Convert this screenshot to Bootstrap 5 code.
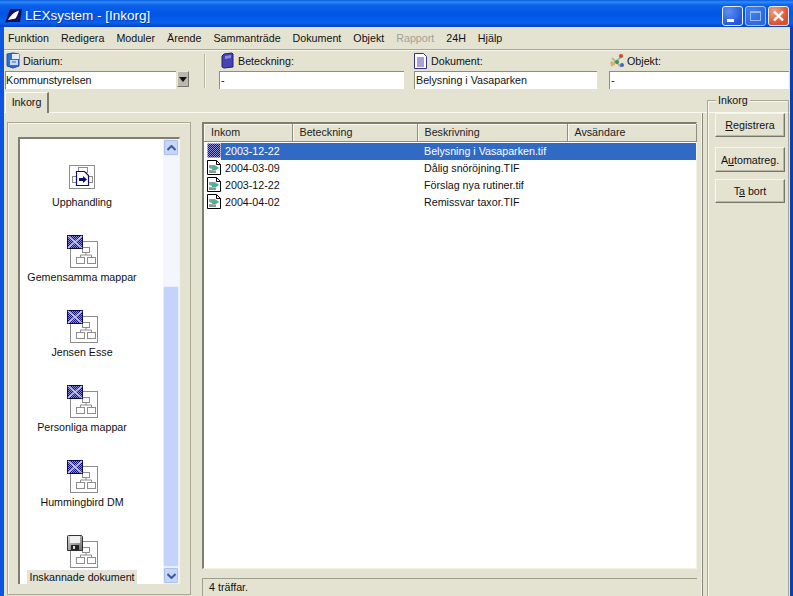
<!DOCTYPE html>
<html lang="sv">

<head>
  <meta charset="UTF-8">
  <title>LEXsystem - [Inkorg]</title>
  <link href="https://cdn.jsdelivr.net/npm/bootstrap@5.3.0/dist/css/bootstrap.min.css" rel="stylesheet">
  <style>
    html, body { height: 596px; overflow: hidden; }
    body { background: #e4e3d2; font: 10.7px/14px "Liberation Sans", Arial, sans-serif; color: #111; }
    .app-window { height: 596px; width: 793px; }
    .title-bar { height: 27px; flex: none; padding: 5px 4px 0 5px; color: #fff; font-size: 13.5px;
      background: linear-gradient(#0a5ae0 0, #2f8bf6 2px, #0b62ea 5px, #0055e5 14px, #0a5fee 23px, #0042bd 27px); }
    .title-text { margin-left: 3px; text-shadow: 1px 1px 0 #0a3a9e; }
    .win-btn { width: 21px; height: 20px; border: 1px solid #e8eefc; border-radius: 3px; padding: 0; display: block; }
    .win-min { background: radial-gradient(circle at 30% 25%, #5a90f6, #2456d8 75%); }
    .win-max { background: radial-gradient(circle at 30% 25%, #5a90f6, #3a6de0 75%); margin-left: 2px; opacity: .72; }
    .win-close { background: radial-gradient(circle at 30% 25%, #f0a08a, #d8502c 70%); margin-left: 2px; }
    .win-frame { border-left: 4px solid #0d55e0; border-right: 3px solid #0c3fae; min-height: 0; }
    .menu-row { height: 23px; flex: none; border-bottom: 1px solid #a8a898; box-shadow: 0 1px 0 #f6f5ea; }
    .menu-row span { margin-right: 12px; }
    .menu-row span:first-child { margin-left: 4px; }
    .menu-off { color: #a3a294; }
    .tool-row { height: 42px; flex: none; }
    .tool-field { flex: none; }
    .tool-label { height: 21px; }
    .tool-label svg { margin-right: 2px; }
    .tool-input { height: 18px; background: #fff; border-top: 1px solid #8e8d7e; border-left: 1px solid #8e8d7e; line-height: 17px; padding-left: 1px; white-space: nowrap; overflow: hidden; }
    .fld-diarium { width: 185px; margin-left: 1px; }
    .fld-diarium .tool-input { width: 171px; padding-left: 0; }
    .fld-bet { width: 185px; margin-left: 27px; }
    .fld-dok { width: 183px; margin-left: 10px; }
    .fld-obj { width: 180px; margin-left: 12px; }
    .lbl-diarium { margin-left: 1px; }
    .lbl-bet { margin-left: 2px; margin-right: 4px !important; }
    .drop-btn { width: 12px; height: 16px; margin-left: 1px; background: #b9b9ae; border: 1px solid #e9e8dc; border-right-color: #77766a; border-bottom-color: #77766a; }
    .tool-sep { width: 2px; height: 34px; background: #b5b4a2; border-right: 1px solid #f5f4ea; margin-left: 14px; margin-right: -14px; margin-top: 4px; }
    .tab-strip { height: 21px; flex: none; border-bottom: 1px solid #fbfaf0; }
    .tab-one { width: 44px; margin-left: 1px; height: 21px; text-align: center; line-height: 19px; border: 1px solid #fbfaf0; border-bottom: 0; border-right: 2px solid #7d7c6e; background: #e4e3d2; }
    .main-row { min-height: 0; }
    .left-pane { width: 184px; margin: 9px 0 1px 3px; border: 1px solid #a9a896; box-shadow: inset 1px 1px 0 #f6f5ea; padding: 14px 10px 10px 10px; flex: none; }
    .tree-box { height: 100%; background: #fff; border-top: 2px solid #7f7e70; border-left: 2px solid #7f7e70; border-right: 1px solid #f4f3e8; }
    .tree-list { width: 124px; flex: none; padding-top: 13px; }
    .tree-item { height: 75px; }
    .tree-icon { height: 40px; padding-top: 8px; }
    .tree-icon.icon-doc { padding-top: 13px; }
    .tree-name { line-height: 14px; padding: 0 2px; margin-top: 3px; white-space: nowrap; }
    .tree-sel { background: #e3e3da; }
    .scroll-col { width: 16px; margin-left: auto; background: #f4f6fd; }
    .scroll-btn { height: 17px; flex: none; background: #c6d6fb; border: 1px solid #eaf0fe; border-radius: 2px; box-shadow: 0 0 0 1px #aebfe8 inset; }
    .scroll-gap { height: 130px; flex: none; }
    .scroll-thumb { background: #c3d3fb; border: 1px solid #e6edfe; border-radius: 2px; }
    .list-pane { width: 495px; margin: 9px 0 0 11px; flex: none; }
    .list-box { background: #fff; border-top: 2px solid #7f7e70; border-left: 2px solid #7f7e70; border-right: 1px solid #f4f3e8; border-bottom: 1px solid #f4f3e8; height: 447px; flex: none; }
    .list-box .table { --bs-table-bg: transparent; --bs-table-color: #111; font-size: inherit; table-layout: fixed; margin: 0; width: 492px; }
    .list-box th { font-weight: normal; background: #e4e3d2; height: 17px; padding: 0 0 2px 7px; line-height: 14px; color: #222; border-right: 1px solid #8e8d7e; border-bottom: 1px solid #8e8d7e; box-shadow: inset 1px 1px 0 #faf9ef; }
    .list-box td { height: 17px; padding: 0; line-height: 16px; white-space: nowrap; }
    .list-box tr.spacer td { height: 2px; }
    .td-date { padding-left: 3px !important; }
    .td-date svg { margin-right: 2px; vertical-align: top; }
    .td-date > span { display: inline-block; padding: 0 3px 0 2px; height: 16px; vertical-align: top; }
    .row-on td { background: #316ac5; color: #fff; }
    .row-on td.td-date { background: linear-gradient(#fff, #fff) no-repeat left / 17px 100%, #316ac5; }
    .td-desc { padding-left: 7px !important; }
    .status-bar { height: 27px; flex: none; }
    .status-cell { height: 18px; margin-top: 9px; border-top: 1px solid #a09f8e; border-left: 1px solid #a09f8e; padding-left: 6px; line-height: 17px; }
    .side-pane { border-left: 1px solid #86857a; margin-left: 5px; box-shadow: -1px 0 0 #f6f5ea; padding-left: 4px; flex: none; width: 86px; }
    .group-box { border: 1px solid #a9a896; box-shadow: inset 1px 1px 0 #f6f5ea; width: 82px; height: calc(100% + 30px); margin-top: -13px; padding: 12px 3px 0 7px; position: relative; }
    .group-title { position: absolute; top: -8px; left: 8px; padding: 0 2px; background: #e4e3d2; }
    .xp-btn { --bs-btn-padding-x: 0; --bs-btn-padding-y: 0; --bs-btn-font-size: 10.7px; --bs-btn-line-height: 14px; --bs-btn-border-radius: 0; --bs-btn-color: #111; --bs-btn-bg: #e4e3d2;
      display: block; width: 70px; border: 1px solid #f7f6ec; border-right-color: #77766a; border-bottom-color: #77766a; box-shadow: inset -1px -1px 0 #b8b7a6; }
    .btn-a { height: 24px; }
    .btn-b { height: 25px; margin-top: 10px; }
    .btn-c { height: 24px; margin-top: 7px; }
  </style>
</head>

<body>
  <svg width="0" height="0" class="d-block" style="position:absolute">
    <defs>
      <pattern id="hatch" width="2" height="2" patternUnits="userSpaceOnUse">
        <rect width="2" height="2" fill="#10107a" />
        <rect width="1" height="1" fill="#8f8fd6" />
        <rect x="1" y="1" width="1" height="1" fill="#8f8fd6" />
      </pattern>
      <linearGradient id="disk" x1="0" y1="0" x2="1" y2="1">
        <stop offset="0" stop-color="#d8d8d8" />
        <stop offset="1" stop-color="#6e6e6e" />
      </linearGradient>
      <symbol id="org" viewBox="0 0 28 27">
        <g fill="#fff" stroke="#8d8d8d">
          <rect x=".5" y=".5" width="27" height="26" />
          <rect x="6.5" y="16.5" width="8" height="6" />
          <rect x="17.5" y="16.5" width="8" height="6" />
          <rect x="12.5" y="6.5" width="7" height="5" />
          <path d="M16 11.500v2.500M10.500 16v-2h11v2" fill="none" />
        </g>
      </symbol>
      <symbol id="scan" viewBox="0 0 14 15">
        <path d="M.5.5h9l4 4v10H.500z" fill="#fff" stroke="#000" />
        <path d="M9.500.5v4h4" fill="none" stroke="#000" />
        <path d="M2 5h6l3 2.500-6 1.500-3-1z" fill="#8fa09c" />
        <path d="M5 6.500h5l2 1.500-3 2H5z" fill="#37b79c" />
        <path d="M2 10l7 .5v2.500H2z" fill="#8f9a8c" />
      </symbol>
      <symbol id="xbox" viewBox="0 0 31 33">
        <use href="#org" x="3" y="6" width="28" height="27" />
        <rect x=".5" y=".5" width="15" height="13" fill="url(#hatch)" stroke="#08084e" />
        <path d="M1 1l14 12M15 1L1 13" stroke="#c8c8f0" stroke-width="1.500" />
      </symbol>
    </defs>
  </svg>

  <div class="app-window d-flex flex-column">
    <div class="title-bar d-flex align-items-center">
      <svg width="17" height="16" viewBox="0 0 17 16">
        <path d="M5 1h12l-2 13H3L0 15z" fill="#12125c" />
        <path d="M3 12C5 8 9 4 14 2.500c-1 3-2 6-3.500 8z" fill="#fff" />
      </svg>
      <span class="title-text flex-grow-1">LEXsystem - [Inkorg]</span>
      <button class="win-btn win-min" aria-label="Minimera"><svg width="19" height="18" class="d-block"><rect x="4" y="12" width="7" height="3" fill="#fff" /></svg></button>
      <button class="win-btn win-max" aria-label="Maximera"><svg width="19" height="18" class="d-block"><rect x="4.500" y="4.500" width="10" height="9" fill="none" stroke="#cfe0ff" /><rect x="4" y="4" width="11" height="2" fill="#cfe0ff" /></svg></button>
      <button class="win-btn win-close" aria-label="Stäng"><svg width="19" height="18" class="d-block"><path d="M5 4.500l9 9M14 4.500l-9 9" stroke="#fff" stroke-width="2.400" /></svg></button>
    </div>

    <div class="win-frame flex-grow-1 d-flex flex-column">
      <div class="menu-row d-flex align-items-center">
        <span>Funktion</span><span>Redigera</span><span>Moduler</span><span>Ärende</span><span>Sammanträde</span><span>Dokument</span><span>Objekt</span><span class="menu-off">Rapport</span><span>24H</span><span>Hjälp</span>
      </div>

      <div class="tool-row d-flex">
        <div class="tool-field fld-diarium">
          <div class="tool-label d-flex align-items-center">
            <svg width="15" height="17" viewBox="0 0 15 17" class="lbl-diarium">
              <path d="M1 2l6-1 6 1v12l-6 2-6-2z" fill="#2f6fd0" stroke="#1f4fa8" />
              <rect x="6" y="2" width="7" height="5" fill="#e4ecfa" />
              <rect x="4" y="8" width="8" height="5" fill="#c9d8f0" />
              <path d="M6 10h4" stroke="#2f6fd0" />
            </svg>
            <span>Diarium:</span>
          </div>
          <div class="d-flex">
            <div class="tool-input">Kommunstyrelsen</div>
            <div class="drop-btn d-flex align-items-center justify-content-center">
              <svg width="8" height="5"><path d="M0 0h8L4 5z" fill="#111" /></svg>
            </div>
          </div>
        </div>
        <div class="tool-sep"></div>
        <div class="tool-field fld-bet">
          <div class="tool-label d-flex align-items-center">
            <svg width="13" height="17" viewBox="0 0 13 17" class="lbl-bet">
              <path d="M1 4l2-2 8-1 1 1v13l-9 1-2-1z" fill="#4543b4" stroke="#23206e" />
              <path d="M4 4l6-1v3L4 7z" fill="#8f8de0" />
            </svg>
            <span>Beteckning:</span>
          </div>
          <div class="tool-input">-</div>
        </div>
        <div class="tool-field fld-dok">
          <div class="tool-label d-flex align-items-center">
            <svg width="13" height="16" viewBox="0 0 13 16" class="me-1">
              <path d="M.5.500h9l3 3v12H.500z" fill="#fff" stroke="#33337a" />
              <path d="M3 5h7M3 7h7M3 9h7M3 11h7M3 13h7" stroke="#5a3fb8" />
            </svg>
            <span>Dokument:</span>
          </div>
          <div class="tool-input">Belysning i Vasaparken</div>
        </div>
        <div class="tool-field fld-obj">
          <div class="tool-label d-flex align-items-center">
            <svg width="16" height="15" viewBox="0 0 16 15">
              <path d="M2 13l11-10M3 5l9 9" stroke="#a8a890" stroke-width="1.500" />
              <path d="M2 8l3 1 1 3-3 1-2-3z" fill="#e0b060" />
              <circle cx="12" cy="3" r="2" fill="#d8432c" />
              <circle cx="8" cy="9" r="2" fill="#2c9a5a" />
              <circle cx="13" cy="12" r="2" fill="#3a66c8" />
            </svg>
            <span>Objekt:</span>
          </div>
          <div class="tool-input">-</div>
        </div>
      </div>

      <div class="tab-strip"><div class="tab-one">Inkorg</div></div>

      <div class="main-row flex-grow-1 d-flex">
        <div class="left-pane">
          <div class="tree-box d-flex">
            <div class="tree-list overflow-hidden text-center">
              <div class="tree-item d-flex flex-column align-items-center">
                <div class="tree-icon icon-doc">
                  <svg width="26" height="24" viewBox="0 0 26 24" class="d-block">
                    <rect x=".5" y=".5" width="25" height="23" fill="#fff" stroke="#8d8d8d" />
                    <g fill="none" stroke="#8d8d8d"><rect x="9.500" y="2.500" width="9" height="5" /><rect x="3.500" y="11.500" width="6" height="6" /><rect x="18.500" y="11.500" width="5" height="6" /></g>
                    <path d="M7.500 6.500h8l4 4v10h-12z" fill="#fff" stroke="#10106a" stroke-width="1.200" />
                    <path d="M10 13h4v-2l4 3.500-4 3.500v-2h-4z" fill="#10106a" />
                  </svg>
                </div>
                <span class="tree-name">Upphandling</span>
              </div>
              <div class="tree-item d-flex flex-column align-items-center">
                <div class="tree-icon"><svg width="31" height="33" class="d-block"><use href="#xbox" /></svg></div>
                <span class="tree-name">Gemensamma mappar</span>
              </div>
              <div class="tree-item d-flex flex-column align-items-center">
                <div class="tree-icon"><svg width="31" height="33" class="d-block"><use href="#xbox" /></svg></div>
                <span class="tree-name">Jensen Esse</span>
              </div>
              <div class="tree-item d-flex flex-column align-items-center">
                <div class="tree-icon"><svg width="31" height="33" class="d-block"><use href="#xbox" /></svg></div>
                <span class="tree-name">Personliga mappar</span>
              </div>
              <div class="tree-item d-flex flex-column align-items-center">
                <div class="tree-icon"><svg width="31" height="33" class="d-block"><use href="#xbox" /></svg></div>
                <span class="tree-name">Hummingbird DM</span>
              </div>
              <div class="tree-item d-flex flex-column align-items-center">
                <div class="tree-icon"><svg width="31" height="33" viewBox="0 0 31 33" class="d-block"><use href="#org" x="3" y="6" width="28" height="27" /><path d="M.5 1.500a1 1 0 0 1 1-1h13l1 1v14h-15z" fill="url(#disk)" stroke="#333" /><rect x="3" y="1" width="10" height="7" fill="#f0f0f0" /><rect x="4" y="10" width="8" height="5" fill="#222" /><rect x="6" y="11" width="2" height="3" fill="#ddd" /></svg></div>
                <span class="tree-name tree-sel">Inskannade dokument</span>
              </div>
            </div>
            <div class="scroll-col d-flex flex-column">
              <div class="scroll-btn d-flex align-items-center justify-content-center"><svg width="9" height="6"><path d="M.5 5l4-4 4 4" fill="none" stroke="#3a5a9a" stroke-width="2" /></svg></div>
              <div class="scroll-gap"></div>
              <div class="scroll-thumb flex-grow-1"></div>
              <div class="scroll-btn d-flex align-items-center justify-content-center"><svg width="9" height="6"><path d="M.5 1l4 4 4-4" fill="none" stroke="#3a5a9a" stroke-width="2" /></svg></div>
            </div>
          </div>
        </div>

        <div class="list-pane d-flex flex-column">
          <div class="list-box">
            <table class="table table-borderless">
              <colgroup><col style="width:88px"><col style="width:125px"><col style="width:150px"><col style="width:129px"></colgroup>
              <thead><tr><th>Inkom</th><th>Beteckning</th><th>Beskrivning</th><th>Avsändare</th></tr></thead>
              <tbody>
                <tr class="spacer"><td colspan="4"></td></tr>
                <tr class="row-on"><td class="td-date"><svg width="14" height="15"><rect x=".5" y=".5" width="13" height="14" fill="url(#hatch)" /></svg><span>2003-12-22</span></td><td></td><td class="td-desc">Belysning i Vasaparken.tif</td><td></td></tr>
                <tr><td class="td-date"><svg width="14" height="15"><use href="#scan" /></svg><span>2004-03-09</span></td><td></td><td class="td-desc">Dålig snöröjning.TIF</td><td></td></tr>
                <tr><td class="td-date"><svg width="14" height="15"><use href="#scan" /></svg><span>2003-12-22</span></td><td></td><td class="td-desc">Förslag nya rutiner.tif</td><td></td></tr>
                <tr><td class="td-date"><svg width="14" height="15"><use href="#scan" /></svg><span>2004-04-02</span></td><td></td><td class="td-desc">Remissvar taxor.TIF</td><td></td></tr>
              </tbody>
            </table>
          </div>
          <div class="status-bar"><div class="status-cell">4 träffar.</div></div>
        </div>

        <div class="side-pane">
          <div class="group-box">
            <span class="group-title">Inkorg</span>
            <button class="btn xp-btn btn-a"><u>R</u>egistrera</button>
            <button class="btn xp-btn btn-b">A<u>u</u>tomatreg.</button>
            <button class="btn xp-btn btn-c">T<u>a</u> bort</button>
          </div>
        </div>
      </div>
    </div>
  </div>

  <script src="https://cdn.jsdelivr.net/npm/bootstrap@5.3.0/dist/js/bootstrap.bundle.min.js"></script>
</body>

</html>
